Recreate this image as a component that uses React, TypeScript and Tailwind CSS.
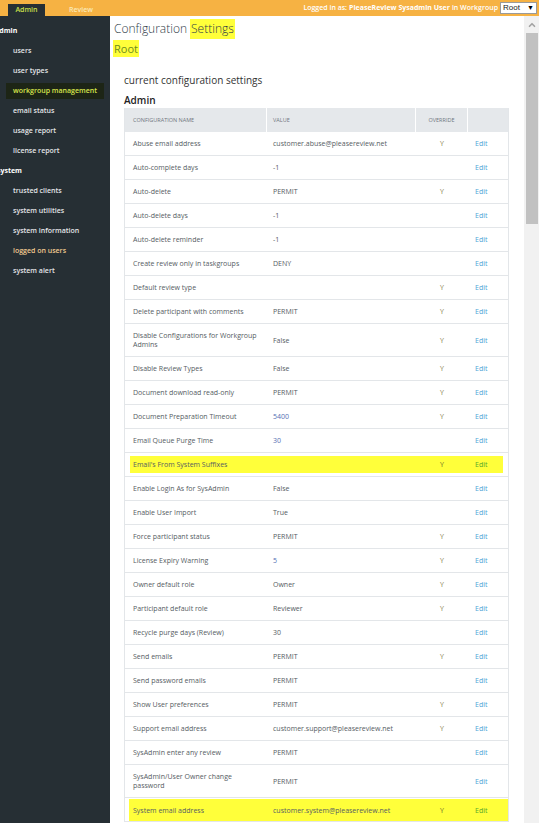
import { ChevronUp } from 'lucide-react'

type Row = {
  name: string
  value?: string
  override?: boolean
  blue?: boolean
  highlight?: 'inset' | 'full'
}

const rows: Row[] = [
  { name: 'Abuse email address', value: 'customer.abuse@pleasereview.net', override: true },
  { name: 'Auto-complete days', value: '-1' },
  { name: 'Auto-delete', value: 'PERMIT', override: true },
  { name: 'Auto-delete days', value: '-1' },
  { name: 'Auto-delete reminder', value: '-1' },
  { name: 'Create review only in taskgroups', value: 'DENY' },
  { name: 'Default review type', override: true },
  { name: 'Delete participant with comments', value: 'PERMIT', override: true },
  { name: 'Disable Configurations for Workgroup Admins', value: 'False', override: true },
  { name: 'Disable Review Types', value: 'False', override: true },
  { name: 'Document download read-only', value: 'PERMIT', override: true },
  { name: 'Document Preparation Timeout', value: '5400', override: true, blue: true },
  { name: 'Email Queue Purge Time', value: '30', blue: true },
  { name: "Email's From System Suffixes", override: true, highlight: 'inset' },
  { name: 'Enable Login As for SysAdmin', value: 'False' },
  { name: 'Enable User Import', value: 'True' },
  { name: 'Force participant status', value: 'PERMIT', override: true },
  { name: 'License Expiry Warning', value: '5', override: true, blue: true },
  { name: 'Owner default role', value: 'Owner', override: true },
  { name: 'Participant default role', value: 'Reviewer', override: true },
  { name: 'Recycle purge days (Review)', value: '30' },
  { name: 'Send emails', value: 'PERMIT', override: true },
  { name: 'Send password emails', value: 'PERMIT' },
  { name: 'Show User preferences', value: 'PERMIT', override: true },
  { name: 'Support email address', value: 'customer.support@pleasereview.net', override: true },
  { name: 'SysAdmin enter any review', value: 'PERMIT' },
  { name: 'SysAdmin/User Owner change password', value: 'PERMIT' },
  { name: 'System email address', value: 'customer.system@pleasereview.net', override: true, highlight: 'full' },
]

const adminLinks = ['users', 'user types', 'workgroup management', 'email status', 'usage report', 'license report']
const systemLinks = ['trusted clients', 'system utilities', 'system information', 'logged on users', 'system alert']

function SideLink({ label }: { label: string }) {
  const active = label === 'workgroup management'
  const tan = label === 'logged on users'
  return (
    <div className="h-[20px] flex items-center pl-[6px]">
      <span
        className={
          active
            ? 'px-[7px] py-[3px] bg-[#1d2516] text-[#d7e54c]'
            : tan
              ? 'px-[7px] text-[#f1c98f]'
              : 'px-[7px] text-[#e4e6e8]'
        }
      >
        {label}
      </span>
    </div>
  )
}

// the name column shrinks by the highlight's left inset so texts stay aligned
function Cells({ row, inset = 0 }: { row: Row; inset?: number }) {
  const nameCls = inset === 5 ? 'w-[137px] pl-[3px]' : inset === 4 ? 'w-[138px] pl-[4px]' : 'w-[142px] pl-[8px]'
  return (
    <>
      <div className={nameCls + ' shrink-0 pr-[4px]'}>{row.name}</div>
      <div className={'w-[149px] shrink-0 pl-[6px] ' + (row.blue ? 'text-[#5670b4]' : '')}>{row.value}</div>
      <div className={'w-[52px] shrink-0 text-center ' + (row.highlight ? 'text-[#6f6a2a]' : 'text-[#8a7c4c]')}>
        {row.override ? 'Y' : ''}
      </div>
      <div className={'flex-1 pl-[7px] ' + (row.highlight ? 'text-[#56a72a]' : 'text-[#4ba3d6]')}>Edit</div>
    </>
  )
}

function ConfigRow({ row }: { row: Row }) {
  if (row.highlight === 'inset') {
    return (
      <div className="border-b border-[#e3e6e9] px-[5px] py-[3px]">
        <div className="flex items-center h-[17px] bg-[#ffff3a]">
          <Cells row={row} inset={5} />
        </div>
      </div>
    )
  }
  if (row.highlight === 'full') {
    return (
      <div className="border-b border-[#e3e6e9] pl-[4px] pt-[1px]">
        <div className="flex items-center h-[22px] bg-[#ffff3a]">
          <Cells row={row} inset={4} />
        </div>
      </div>
    )
  }
  return (
    <div className="flex items-center min-h-[24px] py-[7px] border-b border-[#e3e6e9]">
      <Cells row={row} />
    </div>
  )
}

export default function App() {
  return (
    <div className="h-[823px] w-[539px] overflow-hidden flex flex-col bg-white font-['Open_Sans',sans-serif]">
      {/* Top bar */}
      <div className="h-[16px] shrink-0 bg-[#f6b243] flex items-stretch">
        <div className="w-[110px] shrink-0 flex items-end text-[7px] font-semibold">
          <div className="ml-[8px] w-[37px] h-[12px] bg-[#262f34] text-[#c9e04a] flex items-center justify-center">
            Admin
          </div>
          <div className="ml-[24px] h-[12px] flex items-center text-[#fbe9b6]">Review</div>
        </div>
        <div className="flex-1 flex items-center justify-end pr-[2px] text-[7px] font-semibold text-white">
          <span>Logged in as:</span>
          <span className="font-bold ml-[2px]">PleaseReview Sysadmin User</span>
          <span className="ml-[2px]">in Workgroup</span>
          <div className="ml-[2px] w-[37px] h-[12px] bg-white border border-[#9a9a9a] flex items-center justify-between px-[2px] text-[8px] font-normal text-[#222] font-['Liberation_Sans',sans-serif]">
            <span>Root</span>
            <span className="text-[7px] text-black">▼</span>
          </div>
        </div>
      </div>

      <div className="flex-1 flex min-h-0">
        {/* Sidebar */}
        <div className="w-[110px] shrink-0 bg-[#262f34] text-[7px] font-semibold pt-[5px]">
          <div className="h-[20px] flex items-center -ml-[5px] text-white font-bold">admin</div>
          {adminLinks.map(l => (
            <SideLink key={l} label={l} />
          ))}
          <div className="h-[20px] flex items-center -ml-[3px] text-white font-bold">system</div>
          {systemLinks.map(l => (
            <SideLink key={l} label={l} />
          ))}
        </div>

        {/* Main */}
        <div className="flex-1 min-w-0 overflow-hidden pl-[3px]">
          <div className="mt-[3px] flex items-center text-[12px] font-light text-[#2f3b47] leading-[20px]">
            <span className="pl-[1px] pr-[3px]">Configuration</span>
            <span className="bg-[#ffff3a] px-[1px]">Settings</span>
          </div>
          <div className="mt-[1px] flex">
            <div className="bg-[#ffff3a] px-[1px] text-[11px] text-[#6e8c1e] leading-[17px]">Root</div>
          </div>

          <div className="pl-[11px] mt-[16px]">
            <div className="text-[10px] text-[#333] leading-[14px]">current configuration settings</div>
            <div className="text-[10px] font-semibold text-[#222] leading-[14px] mt-[6px]">Admin</div>

            <div className="mt-[1px] w-[385px] border-x border-[#e3e6e9] text-[7px] leading-[9px] text-[#555c63]">
              <div className="flex h-[24px] bg-[#e5e8eb] text-[5.5px] uppercase text-[#707780]">
                <div className="w-[142px] shrink-0 pl-[8px] flex items-center border-r border-white">Configuration Name</div>
                <div className="w-[149px] shrink-0 pl-[6px] flex items-center border-r border-white">Value</div>
                <div className="w-[52px] shrink-0 flex items-center justify-center border-r border-white">Override</div>
                <div className="flex-1" />
              </div>
              {rows.map(r => (
                <ConfigRow key={r.name} row={r} />
              ))}
            </div>
          </div>
        </div>

        {/* Scrollbar */}
        <div className="w-[15px] shrink-0 bg-[#f1f1f1] flex flex-col items-center">
          <ChevronUp className="w-[10px] h-[10px] mt-[4px] text-[#a3a3a3]" strokeWidth={4} />
          <div className="w-[12px] h-[191px] mt-[3px] bg-[#c1c1c1]" />
        </div>
      </div>
    </div>
  )
}
